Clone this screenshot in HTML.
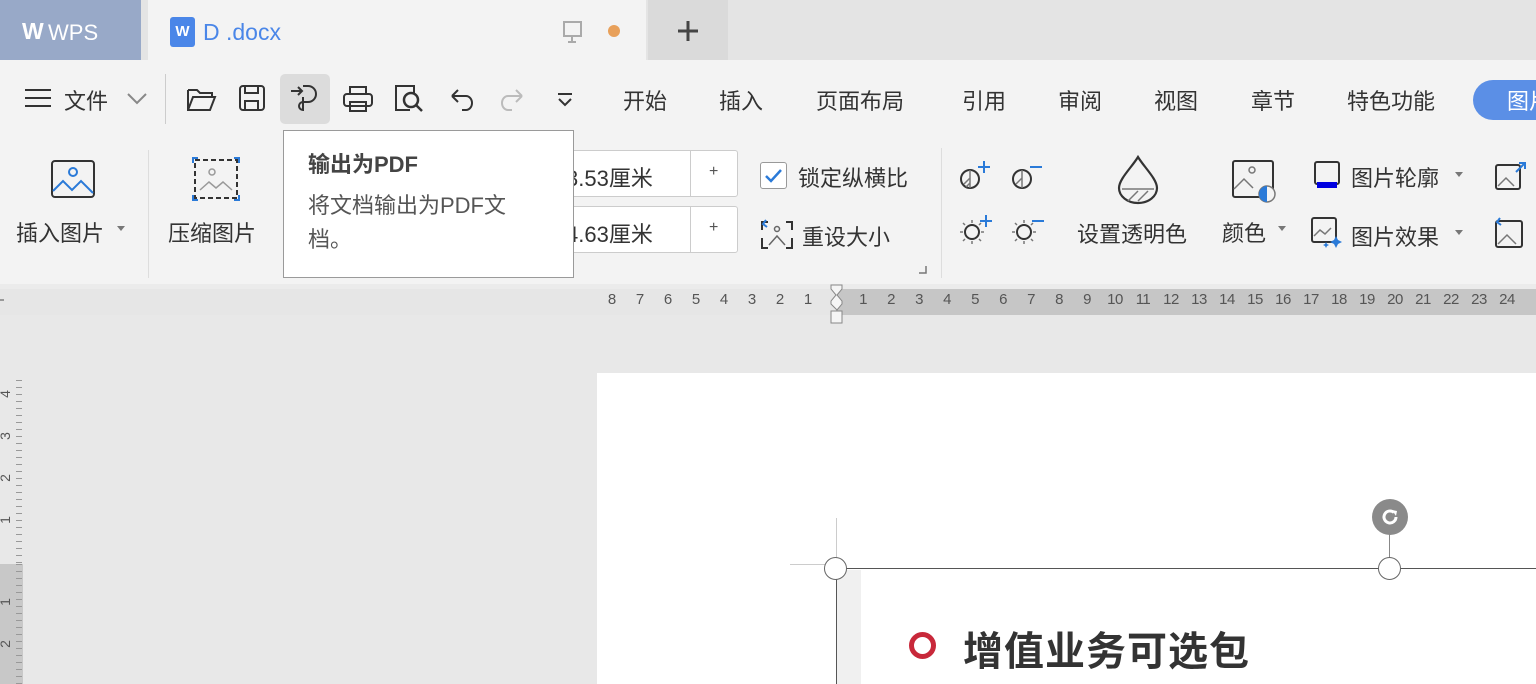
<!DOCTYPE html>
<html><head><meta charset="utf-8"><style>
*{margin:0;padding:0;box-sizing:border-box}
body{width:1536px;height:684px;overflow:hidden;background:#e8e8e8;font-family:"Liberation Sans","Noto Sans CJK SC",sans-serif;position:relative;color:#333}
.a{position:absolute}
.t{font-size:22px;color:#333;white-space:nowrap}
svg{position:absolute;overflow:visible}
.rn span{display:inline-block;width:28px;text-align:center}
</style></head><body>
<!-- tab bar -->
<div class="a" style="left:0;top:0;width:1536px;height:60px;background:#e4e4e4"></div>
<div class="a" style="left:0;top:0;width:141px;height:60px;background:#98a9c8"></div>
<div class="a" style="left:22px;top:18px;color:#fff;font-size:23px;font-weight:bold;letter-spacing:-1px">W</div>
<div class="a" style="left:48px;top:20px;color:#fff;font-size:22px">WPS</div>
<div class="a" style="left:148px;top:0;width:498px;height:60px;background:#f3f3f3"></div>
<div class="a" style="left:170px;top:17px;width:25px;height:30px;background:#4a86e8;border-radius:3px;color:#fff;font-size:15px;text-align:center;line-height:30px;font-weight:bold">W</div>
<div class="a" style="left:203px;top:19px;color:#4a86e8;font-size:23px">D .docx</div>
<svg style="left:562px;top:21px" width="22" height="22"><rect x="2" y="1" width="17" height="14" fill="none" stroke="#aaa" stroke-width="2"/><path d="M10 15v5M6 21h8" stroke="#aaa" stroke-width="2"/></svg>
<div class="a" style="left:608px;top:25px;width:12px;height:12px;border-radius:50%;background:#e8a05a"></div>
<div class="a" style="left:648px;top:0;width:80px;height:60px;background:#dadada"></div>
<svg style="left:676px;top:19px" width="24" height="24"><path d="M12 2v20M2 12h20" stroke="#444" stroke-width="3"/></svg>
<!-- toolbar -->
<div class="a" style="left:0;top:60px;width:1536px;height:224px;background:#f3f3f3"></div>
<svg style="left:24px;top:88px" width="28" height="22"><path d="M1 2h26M1 10h26M1 18h26" stroke="#333" stroke-width="2"/></svg>
<div class="a t" style="left:64px;top:84px">文件</div>
<svg style="left:126px;top:92px" width="22" height="14"><path d="M2 2l9 9 9-9" fill="none" stroke="#888" stroke-width="2"/></svg>
<div class="a" style="left:165px;top:74px;width:1px;height:50px;background:#ccc"></div>
<svg style="left:186px;top:86px" width="32" height="26"><path d="M2 4h9l3 3h12v4M2 4v20h22l5-13H7L2 24" fill="none" stroke="#333" stroke-width="2"/></svg>
<svg style="left:238px;top:84px" width="30" height="28"><rect x="2" y="2" width="24" height="24" rx="3" fill="none" stroke="#333" stroke-width="2"/><path d="M7 2v7h13V2M7 26v-9h13v9" fill="none" stroke="#333" stroke-width="2"/></svg>
<div class="a" style="left:280px;top:74px;width:50px;height:50px;background:#dcdcdc;border-radius:5px"></div>
<svg style="left:289px;top:84px" width="34" height="32"><path d="M2 7h10M9 3l4 4-4 4M14 2h5a8 8 0 010 16h-5a4 4 0 100 8V13" fill="none" stroke="#333" stroke-width="2"/></svg>
<svg style="left:342px;top:85px" width="32" height="28"><rect x="8" y="2" width="16" height="7" fill="none" stroke="#333" stroke-width="2"/><rect x="2" y="9" width="28" height="12" rx="3" fill="none" stroke="#333" stroke-width="2"/><rect x="8" y="17" width="16" height="9" fill="none" stroke="#333" stroke-width="2"/></svg>
<svg style="left:394px;top:84px" width="32" height="30"><path d="M16 26H2V2h18v8" fill="none" stroke="#333" stroke-width="2"/><circle cx="17" cy="16" r="7" fill="none" stroke="#333" stroke-width="2.5"/><path d="M22 21l6 6" stroke="#333" stroke-width="2.5"/></svg>
<svg style="left:448px;top:86px" width="28" height="28"><path d="M4 10h14a6 7 0 010 14h-4M4 10l6-6M4 10l6 6" fill="none" stroke="#333" stroke-width="2"/></svg>
<svg style="left:498px;top:86px" width="28" height="28"><path d="M24 10H10a6 7 0 000 14h4M24 10l-6-6M24 10l-6 6" fill="none" stroke="#bbb" stroke-width="2"/></svg>
<svg style="left:556px;top:92px" width="18" height="16"><path d="M2 2h14M3 7l6 6 6-6" fill="none" stroke="#333" stroke-width="2"/></svg>
<div class="a t" style="left:623px;top:84px">开始</div>
<div class="a t" style="left:719px;top:84px">插入</div>
<div class="a t" style="left:816px;top:84px">页面布局</div>
<div class="a t" style="left:962px;top:84px">引用</div>
<div class="a t" style="left:1058px;top:84px">审阅</div>
<div class="a t" style="left:1154px;top:84px">视图</div>
<div class="a t" style="left:1251px;top:84px">章节</div>
<div class="a t" style="left:1347px;top:84px">特色功能</div>
<div class="a" style="left:1473px;top:80px;width:90px;height:40px;border-radius:20px;background:#5b8fe6;color:#fff;font-size:22px;padding:4px 0 0 34px">图片</div>
<!-- ribbon -->
<svg style="left:50px;top:159px" width="46" height="40"><rect x="2" y="2" width="42" height="36" rx="3" fill="none" stroke="#333" stroke-width="2"/><circle cx="23" cy="13" r="4" fill="none" stroke="#2a7ad8" stroke-width="2"/><path d="M3 32l10-10 9 9 9-9 12 12" fill="none" stroke="#2a7ad8" stroke-width="2"/></svg>
<div class="a t" style="left:16px;top:216px">插入图片</div>
<div class="a" style="left:117px;top:226px;border:4px solid transparent;border-top:5px solid #777"></div>
<div class="a" style="left:148px;top:150px;width:1px;height:128px;background:#ddd"></div>
<svg style="left:192px;top:157px" width="48" height="44"><rect x="3" y="3" width="42" height="38" fill="none" stroke="#333" stroke-width="2" stroke-dasharray="5 3"/><path d="M1 6V1h5M42 1h5v5M1 38v5h5M42 43h5v-5" fill="none" stroke="#2a7ad8" stroke-width="2"/><circle cx="20" cy="15" r="3" fill="none" stroke="#999" stroke-width="1.5"/><path d="M8 33l9-8 7 6 7-6 9 8" fill="none" stroke="#999" stroke-width="1.5"/></svg>
<div class="a t" style="left:168px;top:216px">压缩图片</div>
<!-- size boxes -->
<div class="a" style="left:560px;top:150px;width:178px;height:47px;background:#fff;border:1px solid #ccc;border-radius:3px"></div>
<div class="a" style="left:690px;top:150px;width:1px;height:47px;background:#ccc"></div>
<div class="a" style="left:709px;top:163px;font-size:16px;color:#555">+</div>
<div class="a t" style="left:566px;top:161px">3.53厘米</div>
<div class="a" style="left:560px;top:206px;width:178px;height:47px;background:#fff;border:1px solid #ccc;border-radius:3px"></div>
<div class="a" style="left:690px;top:206px;width:1px;height:47px;background:#ccc"></div>
<div class="a" style="left:709px;top:219px;font-size:16px;color:#555">+</div>
<div class="a t" style="left:566px;top:217px">4.63厘米</div>
<div class="a" style="left:760px;top:162px;width:27px;height:27px;border:1.5px solid #999;border-radius:3px;background:#fff"></div>
<svg style="left:764px;top:168px" width="20" height="16"><path d="M2 8l5 5 10-11" fill="none" stroke="#2a7ad8" stroke-width="2.5"/></svg>
<div class="a t" style="left:798px;top:161px">锁定纵横比</div>
<svg style="left:760px;top:218px" width="34" height="32"><path d="M2 12V4h6M26 4h6v8M2 20v10h6M26 30h6V20" fill="none" stroke="#333" stroke-width="2"/><path d="M6 2l-3 4 4 3" fill="none" stroke="#2a7ad8" stroke-width="2"/><circle cx="17" cy="11" r="2.5" fill="none" stroke="#666" stroke-width="1.5"/><path d="M9 27l8-9 8 9" fill="none" stroke="#666" stroke-width="1.5"/></svg>
<div class="a t" style="left:802px;top:220px">重设大小</div>
<svg style="left:918px;top:265px" width="10" height="10"><path d="M8 1v7H1" fill="none" stroke="#777" stroke-width="1.5"/></svg>
<div class="a" style="left:941px;top:148px;width:1px;height:130px;background:#ddd"></div>
<svg style="left:958px;top:158px" width="36" height="34"><circle cx="12" cy="21" r="9" fill="none" stroke="#333" stroke-width="2"/><path d="M12 12v18M6 26l6-6M8 29l4-4" stroke="#777" stroke-width="1.5"/><path d="M26 3v12M20 9h12" stroke="#2a7ad8" stroke-width="2"/></svg>
<svg style="left:1010px;top:158px" width="36" height="34"><circle cx="12" cy="21" r="9" fill="none" stroke="#333" stroke-width="2"/><path d="M12 12v18M6 26l6-6" stroke="#777" stroke-width="1.5"/><path d="M20 9h12" stroke="#2a7ad8" stroke-width="2"/></svg>
<svg style="left:958px;top:212px" width="36" height="34"><circle cx="14" cy="20" r="7" fill="none" stroke="#333" stroke-width="2"/><path d="M14 8v3M14 29v3M2 20h3M23 20h3M5 11l2 2M21 27l2 2M5 29l2-2M21 13l2-2" stroke="#777" stroke-width="1.5"/><path d="M28 3v12M22 9h12" stroke="#2a7ad8" stroke-width="2"/></svg>
<svg style="left:1010px;top:212px" width="36" height="34"><circle cx="14" cy="20" r="7" fill="none" stroke="#333" stroke-width="2"/><path d="M14 8v3M14 29v3M2 20h3M23 20h3M5 11l2 2M21 27l2 2M5 29l2-2M21 13l2-2" stroke="#777" stroke-width="1.5"/><path d="M22 9h12" stroke="#2a7ad8" stroke-width="2"/></svg>
<svg style="left:1116px;top:155px" width="44" height="50"><path d="M22 2C16 12 3 24 3 33a19 15 0 0038 0C41 24 28 12 22 2z" fill="none" stroke="#333" stroke-width="2.2"/><path d="M6 34h32M12 46l10-10M22 46l10-10" stroke="#777" stroke-width="1.5"/></svg>
<div class="a t" style="left:1077px;top:217px">设置透明色</div>
<svg style="left:1231px;top:159px" width="48" height="46"><rect x="2" y="2" width="40" height="36" rx="2" fill="none" stroke="#333" stroke-width="2"/><circle cx="21" cy="11" r="3" fill="none" stroke="#777" stroke-width="1.5"/><path d="M3 30l10-10 9 9" fill="none" stroke="#777" stroke-width="1.5"/><circle cx="36" cy="35" r="8" fill="#f3f3f3" stroke="#777" stroke-width="1.5"/><path d="M36 27a8 8 0 000 16z" fill="#2a7ad8"/></svg>
<div class="a t" style="left:1222px;top:216px">颜色</div>
<div class="a" style="left:1278px;top:226px;border:4px solid transparent;border-top:5px solid #777"></div>
<svg style="left:1313px;top:160px" width="30" height="30"><rect x="2" y="2" width="24" height="22" rx="2" fill="none" stroke="#333" stroke-width="2"/><rect x="4" y="22" width="20" height="6" fill="#0000e0"/></svg>
<div class="a t" style="left:1351px;top:161px">图片轮廓</div>
<div class="a" style="left:1455px;top:172px;border:4px solid transparent;border-top:5px solid #777"></div>
<svg style="left:1310px;top:216px" width="34" height="34"><rect x="2" y="2" width="24" height="24" rx="2" fill="none" stroke="#333" stroke-width="2"/><path d="M4 20l6-6 5 4 6-6" fill="none" stroke="#777" stroke-width="1.5"/><path d="M26 20l2 4 4 2-4 2-2 4-2-4-4-2 4-2zM16 26l1 2 2 1-2 1-1 2-1-2-2-1 2-1z" fill="#2a7ad8"/></svg>
<div class="a t" style="left:1351px;top:220px">图片效果</div>
<div class="a" style="left:1455px;top:230px;border:4px solid transparent;border-top:5px solid #777"></div>
<svg style="left:1494px;top:160px" width="34" height="30"><rect x="2" y="5" width="24" height="24" rx="2" fill="none" stroke="#333" stroke-width="2"/><path d="M22 12l9-9M25 3h6v6" fill="none" stroke="#2a7ad8" stroke-width="2"/><path d="M4 26l8-8 8 8" fill="none" stroke="#777" stroke-width="1.5"/></svg>
<svg style="left:1494px;top:216px" width="34" height="34"><rect x="2" y="5" width="26" height="26" rx="2" fill="none" stroke="#333" stroke-width="2"/><path d="M6 2l-3 4 4 3" fill="none" stroke="#2a7ad8" stroke-width="2"/><path d="M4 28l9-9 9 9" fill="none" stroke="#777" stroke-width="1.5"/></svg>
<!-- tooltip -->
<div class="a" style="left:283px;top:130px;width:291px;height:148px;background:#fff;border:1px solid #9a9a9a"></div>
<div class="a" style="left:308px;top:147px;font-size:22px;font-weight:bold;color:#444">输出为PDF</div>
<div class="a" style="left:308px;top:189px;font-size:22px;color:#555;line-height:34px;width:240px">将文档输出为PDF文档。</div>
<!-- ruler -->
<div class="a" style="left:0;top:284px;width:1536px;height:5px;background:#ebebeb"></div>
<div class="a" style="left:0;top:289px;width:836px;height:26px;background:#e6e6e6"></div>
<div class="a" style="left:836px;top:289px;width:700px;height:26px;background:#c6c6c6"></div>
<div class="a" style="left:0;top:299px;width:4px;height:2px;background:#999"></div>
<div class="a rn" style="left:598px;top:291px;font-size:15px;color:#555;white-space:nowrap"><span>8</span><span>7</span><span>6</span><span>5</span><span>4</span><span>3</span><span>2</span><span>1</span></div>
<div class="a rn" style="left:849px;top:291px;font-size:15px;color:#555;white-space:nowrap;letter-spacing:-0.5px"><span>1</span><span>2</span><span>3</span><span>4</span><span>5</span><span>6</span><span>7</span><span>8</span><span>9</span><span>10</span><span>11</span><span>12</span><span>13</span><span>14</span><span>15</span><span>16</span><span>17</span><span>18</span><span>19</span><span>20</span><span>21</span><span>22</span><span>23</span><span>24</span></div>
<svg style="left:829px;top:285px" width="16" height="40"><path d="M2 0h11v4l-5 6 5 6v3l-5 6-6-6v-3l5-6L2 4z" fill="#f5f5f5" stroke="#888"/><rect x="2" y="26" width="11" height="12" fill="#f5f5f5" stroke="#888"/></svg>
<!-- vertical ruler -->
<div class="a" style="left:0;top:380px;width:23px;height:184px;background:#e8e8e8;background-image:repeating-linear-gradient(to bottom,#999 0 1px,transparent 1px 7px);background-size:6px 100%;background-repeat:no-repeat;background-position:16px 0"></div>
<div class="a" style="left:0;top:564px;width:23px;height:120px;background:#c8c8c8;background-image:repeating-linear-gradient(to bottom,#999 0 1px,transparent 1px 7px);background-size:6px 100%;background-repeat:no-repeat;background-position:16px 0"></div>
<div class="a" style="left:1px;top:386px;font-size:14px;color:#555;transform:rotate(-90deg)">4</div>
<div class="a" style="left:1px;top:428px;font-size:14px;color:#555;transform:rotate(-90deg)">3</div>
<div class="a" style="left:1px;top:470px;font-size:14px;color:#555;transform:rotate(-90deg)">2</div>
<div class="a" style="left:1px;top:512px;font-size:14px;color:#555;transform:rotate(-90deg)">1</div>
<div class="a" style="left:1px;top:594px;font-size:14px;color:#555;transform:rotate(-90deg)">1</div>
<div class="a" style="left:1px;top:636px;font-size:14px;color:#555;transform:rotate(-90deg)">2</div>
<!-- page -->
<div class="a" style="left:597px;top:373px;width:939px;height:311px;background:#fff"></div>
<div class="a" style="left:836px;top:518px;width:1px;height:40px;background:#ccc"></div>
<div class="a" style="left:790px;top:564px;width:40px;height:1px;background:#ccc"></div>
<div class="a" style="left:836px;top:568px;width:700px;height:116px;background:#fff;border-left:1px solid #555;border-top:1px solid #555"></div>
<div class="a" style="left:837px;top:570px;width:24px;height:114px;background:#f0f0f0"></div>
<div class="a" style="left:1389px;top:530px;width:1px;height:30px;background:#888"></div>
<div class="a" style="left:1372px;top:499px;width:36px;height:36px;border-radius:50%;background:#8a8a8a"></div>
<svg style="left:1380px;top:507px" width="20" height="20"><path d="M16 10a6 6 0 11-2-4.5" fill="none" stroke="#fff" stroke-width="3"/><path d="M12 3l5 1-1 5" fill="#fff"/></svg>
<div class="a" style="left:824px;top:557px;width:23px;height:23px;border-radius:50%;background:#fff;border:1.5px solid #666"></div>
<div class="a" style="left:1378px;top:557px;width:23px;height:23px;border-radius:50%;background:#fff;border:1.5px solid #666"></div>
<div class="a" style="left:909px;top:632px;width:27px;height:27px;border-radius:50%;border:5px solid #c8283a"></div>
<div class="a" style="left:963px;top:619px;font-size:40px;font-weight:bold;color:#333;letter-spacing:1px">增值业务可选包</div>
</body></html>
